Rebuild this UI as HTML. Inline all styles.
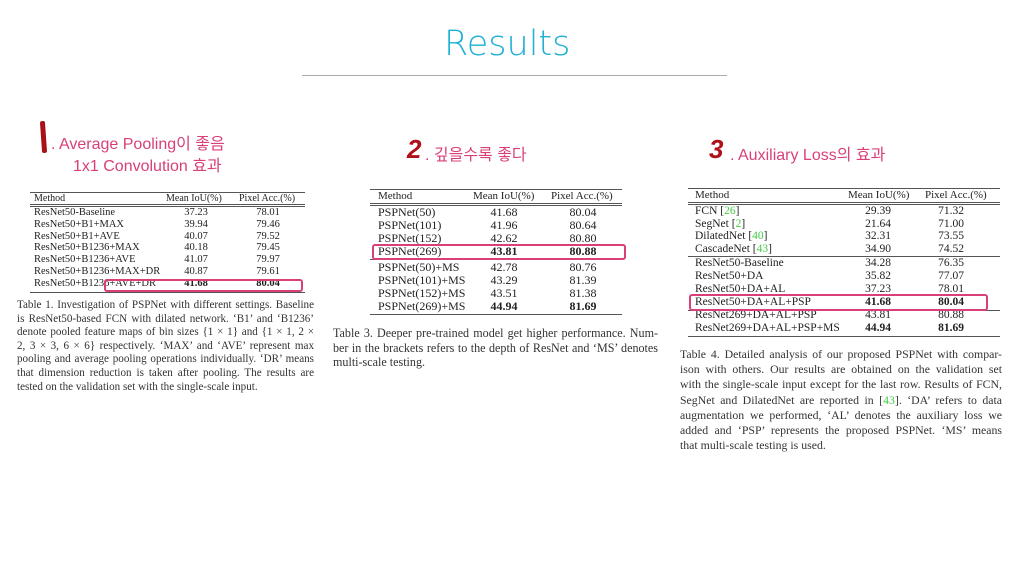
<!DOCTYPE html>
<html><head><meta charset="utf-8"><style>
*{margin:0;padding:0;box-sizing:border-box}
body{width:1020px;height:574px;background:#fff;position:relative;overflow:hidden;font-family:"Liberation Serif",serif;color:#222}
.a{position:absolute;white-space:nowrap}
.h{font-family:"Liberation Sans","Noto Sans CJK KR",sans-serif;color:#d9407a;font-size:16px}
.n{font-family:"Liberation Sans",sans-serif;color:#b0101a;font-weight:bold;font-style:italic}
.r{position:absolute;height:1px;background:#555}
.t{position:absolute;line-height:12px;white-space:nowrap}
.c{position:absolute;text-align:justify;text-align-last:justify;white-space:nowrap;color:#333}
.box{position:absolute;border:2px solid #d9407a;border-radius:3px}
.g{color:#4c4}
</style></head><body>
<div class="a" style="left:444px;top:24px;font-family:'DejaVu Sans',sans-serif;font-size:35px;color:#1fb0d4;font-weight:200">Results</div>
<div class="r" style="left:302px;top:75px;width:425px;background:#aaa"></div>

<div class="a" style="left:41px;top:121px;width:5px;height:32px;background:#a8101a;border-radius:2px;transform:rotate(-4deg)"></div>
<div class="a h" style="left:51px;top:130px">. Average Pooling이 좋음</div>
<div class="a h" style="left:73px;top:152px">1x1 Convolution 효과</div>

<div class="a n" style="left:407px;top:134px;font-size:26px">2</div>
<div class="a h" style="left:425px;top:141px">. 깊을수록 좋다</div>

<div class="a n" style="left:709px;top:134px;font-size:26px">3</div>
<div class="a h" style="left:730px;top:141px">. Auxiliary Loss의 효과</div>

<!-- Table 1 -->
<div class="r" style="left:30px;top:192px;width:275px"></div>
<div class="r" style="left:30px;top:204px;width:275px"></div>
<div class="r" style="left:30px;top:206px;width:275px"></div>
<div class="r" style="left:30px;top:292px;width:275px"></div>
<div class="t" style="left:34px;top:193px;font-size:10px">Method</div>
<div class="t" style="left:166px;top:193px;font-size:10px">Mean IoU(%)</div>
<div class="t" style="left:239px;top:193px;font-size:10px">Pixel Acc.(%)</div>
<div style="position:absolute;left:34px;top:207px;font-size:10.5px;line-height:11.8px">ResNet50-Baseline<br>ResNet50+B1+MAX<br>ResNet50+B1+AVE<br>ResNet50+B1236+MAX<br>ResNet50+B1236+AVE<br>ResNet50+B1236+MAX+DR<br>ResNet50+B1236+AVE+DR</div>
<div style="position:absolute;left:178px;width:36px;text-align:center;top:207px;font-size:10.5px;line-height:11.8px">37.23<br>39.94<br>40.07<br>40.18<br>41.07<br>40.87<br><b>41.68</b></div>
<div style="position:absolute;left:250px;width:36px;text-align:center;top:207px;font-size:10.5px;line-height:11.8px">78.01<br>79.46<br>79.52<br>79.45<br>79.97<br>79.61<br><b>80.04</b></div>
<div class="box" style="left:104px;top:279px;width:199px;height:13px"></div>
<div class="c" style="left:17px;top:299px;width:297px;font-size:11.1px;line-height:13.6px">
<div>Table 1. Investigation of PSPNet with different settings. Baseline</div>
<div>is ResNet50-based FCN with dilated network. ‘B1’ and ‘B1236’</div>
<div>denote pooled feature maps of bin sizes {1 × 1} and {1 × 1, 2 ×</div>
<div>2, 3 × 3, 6 × 6} respectively. ‘MAX’ and ‘AVE’ represent max</div>
<div>pooling and average pooling operations individually. ‘DR’ means</div>
<div>that dimension reduction is taken after pooling. The results are</div>
<div style="text-align-last:left">tested on the validation set with the single-scale input.</div>
</div>

<!-- Table 3 -->
<div class="r" style="left:370px;top:189px;width:252px"></div>
<div class="r" style="left:370px;top:203px;width:252px"></div>
<div class="r" style="left:370px;top:205px;width:252px"></div>
<div class="r" style="left:370px;top:259px;width:252px"></div>
<div class="r" style="left:370px;top:314px;width:252px"></div>
<div class="t" style="left:378px;top:190px;font-size:11px">Method</div>
<div class="t" style="left:473px;top:190px;font-size:11px">Mean IoU(%)</div>
<div class="t" style="left:551px;top:190px;font-size:11px">Pixel Acc.(%)</div>
<div style="position:absolute;left:378px;top:206px;font-size:12px;line-height:13px">PSPNet(50)<br>PSPNet(101)<br>PSPNet(152)<br>PSPNet(269)</div>
<div style="position:absolute;left:378px;top:261px;font-size:12px;line-height:13px">PSPNet(50)+MS<br>PSPNet(101)+MS<br>PSPNet(152)+MS<br>PSPNet(269)+MS</div>
<div style="position:absolute;left:485px;width:38px;text-align:center;top:206px;font-size:12px;line-height:13px">41.68<br>41.96<br>42.62<br><b>43.81</b></div>
<div style="position:absolute;left:564px;width:38px;text-align:center;top:206px;font-size:12px;line-height:13px">80.04<br>80.64<br>80.80<br><b>80.88</b></div>
<div style="position:absolute;left:485px;width:38px;text-align:center;top:261px;font-size:12px;line-height:13px">42.78<br>43.29<br>43.51<br><b>44.94</b></div>
<div style="position:absolute;left:564px;width:38px;text-align:center;top:261px;font-size:12px;line-height:13px">80.76<br>81.39<br>81.38<br><b>81.69</b></div>
<div class="box" style="left:372px;top:244px;width:254px;height:16px"></div>
<div class="c" style="left:333px;top:326px;width:325px;font-size:12.1px;line-height:14.5px">
<div>Table 3. Deeper pre-trained model get higher performance. Num-</div>
<div>ber in the brackets refers to the depth of ResNet and ‘MS’ denotes</div>
<div style="text-align-last:left">multi-scale testing.</div>
</div>

<!-- Table 4 -->
<div class="r" style="left:688px;top:188px;width:312px"></div>
<div class="r" style="left:688px;top:202px;width:312px"></div>
<div class="r" style="left:688px;top:204px;width:312px"></div>
<div class="r" style="left:688px;top:256px;width:312px"></div>
<div class="r" style="left:688px;top:310px;width:312px"></div>
<div class="r" style="left:688px;top:336px;width:312px"></div>
<div class="t" style="left:695px;top:189px;font-size:11px">Method</div>
<div class="t" style="left:848px;top:189px;font-size:11px">Mean IoU(%)</div>
<div class="t" style="left:925px;top:189px;font-size:11px">Pixel Acc.(%)</div>
<div style="position:absolute;left:695px;top:205px;font-size:11.5px;line-height:12.7px">FCN [<span class="g">26</span>]<br>SegNet [<span class="g">2</span>]<br>DilatedNet [<span class="g">40</span>]<br>CascadeNet [<span class="g">43</span>]</div>
<div style="position:absolute;left:695px;top:257px;font-size:11.5px;line-height:12.9px">ResNet50-Baseline<br>ResNet50+DA<br>ResNet50+DA+AL<br>ResNet50+DA+AL+PSP<br>ResNet269+DA+AL+PSP<br>ResNet269+DA+AL+PSP+MS</div>
<div style="position:absolute;left:860px;width:36px;text-align:center;top:205px;font-size:11.5px;line-height:12.7px">29.39<br>21.64<br>32.31<br>34.90</div>
<div style="position:absolute;left:933px;width:36px;text-align:center;top:205px;font-size:11.5px;line-height:12.7px">71.32<br>71.00<br>73.55<br>74.52</div>
<div style="position:absolute;left:860px;width:36px;text-align:center;top:257px;font-size:11.5px;line-height:12.9px">34.28<br>35.82<br>37.23<br><b>41.68</b><br>43.81<br><b>44.94</b></div>
<div style="position:absolute;left:933px;width:36px;text-align:center;top:257px;font-size:11.5px;line-height:12.9px">76.35<br>77.07<br>78.01<br><b>80.04</b><br>80.88<br><b>81.69</b></div>
<div class="box" style="left:689px;top:294px;width:299px;height:17px"></div>
<div class="c" style="left:680px;top:347px;width:322px;font-size:11.8px;line-height:15.2px">
<div>Table 4. Detailed analysis of our proposed PSPNet with compar-</div>
<div>ison with others. Our results are obtained on the validation set</div>
<div>with the single-scale input except for the last row. Results of FCN,</div>
<div>SegNet and DilatedNet are reported in [<span class="g">43</span>]. ‘DA’ refers to data</div>
<div>augmentation we performed, ‘AL’ denotes the auxiliary loss we</div>
<div>added and ‘PSP’ represents the proposed PSPNet. ‘MS’ means</div>
<div style="text-align-last:left">that multi-scale testing is used.</div>
</div>
</body></html>
